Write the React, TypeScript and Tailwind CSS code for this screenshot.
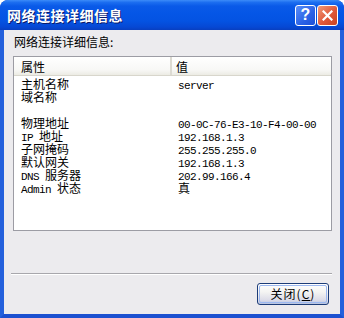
import React from "react";

const cjk = '"Noto Sans CJK SC", "Noto Sans", sans-serif';

function Mixed({ text }: { text: string }) {
  const parts = text.split(/([\x20-\x7E]+)/).filter((p) => p.length > 0);
  return (
    <>
      {parts.map((p, i) =>
        /^[\x20-\x7E]+$/.test(p) ? (
          <span
            key={i}
            className="text-[11px] tracking-[-0.6px] whitespace-pre"
            style={{ fontFamily: '"Liberation Mono", monospace' }}
          >
            {p}
          </span>
        ) : (
          <span key={i}>{p}</span>
        )
      )}
    </>
  );
}

const rows: [string, string][] = [
  ["主机名称", "server"],
  ["域名称", ""],
  ["", ""],
  ["物理地址", "00-0C-76-E3-10-F4-00-00"],
  ["IP 地址", "192.168.1.3"],
  ["子网掩码", "255.255.255.0"],
  ["默认网关", "192.168.1.3"],
  ["DNS 服务器", "202.99.166.4"],
  ["Admin 状态", "真"],
];

export default function App() {
  return (
    <div
      className="w-[344px] h-[318px] flex flex-col bg-[#0a3fc8] rounded-t-[8px] overflow-hidden"
      style={{ fontFamily: cjk }}
    >
      {/* Title bar */}
      <div className="h-[30px] flex items-center pl-[7px] pr-[6px] bg-[linear-gradient(to_bottom,#3c8cf8_0%,#1c6ef0_8%,#0a5ae8_20%,#0556e6_45%,#0453e2_70%,#0648d4_90%,#083fc0_100%)]">
        <div className="flex-1 text-white text-[14px] font-bold leading-[14px] [text-shadow:1px_1px_0_#0a1a6a] tracking-[0.5px]">
          网络连接详细信息
        </div>
        <div className="flex gap-[1px]">
          <div className="w-[21px] h-[21px] rounded-[3px] border border-white flex items-center justify-center bg-[linear-gradient(135deg,#5a8ef8,#2a62e6_60%,#1c50d8)]">
            <span className="text-white font-bold text-[16px] leading-[16px]" style={{ fontFamily: '"Liberation Sans", sans-serif' }}>?</span>
          </div>
          <div className="w-[21px] h-[21px] rounded-[3px] border border-white flex items-center justify-center bg-[linear-gradient(135deg,#f09a78,#e0583a_55%,#c84220)]">
            <svg width="11" height="11" viewBox="0 0 11 11">
              <path d="M1.5 1.5 L9.5 9.5 M9.5 1.5 L1.5 9.5" stroke="white" strokeWidth="2.2" strokeLinecap="square" />
            </svg>
          </div>
        </div>
      </div>

      {/* Body */}
      <div className="flex-1 flex flex-col border-l-[4px] border-r-[4px] border-b-[4px] border-l-[#2460dc] border-r-[#2460dc] border-b-[#1c50d0] bg-[#ecebee]">
        <div className="pl-[10px] pt-[5px] h-[26px] text-[12px] leading-[14px] text-black">
          网络连接详细信息:
        </div>
        <div className="ml-[9px] mr-[8px] h-[175px] border border-[#9c9ca4] bg-white flex flex-col text-[12px] text-black">
          <div className="h-[19px] flex border-b border-[#d8d6cc] bg-[linear-gradient(to_bottom,#ffffff,#f8f8f6_70%,#ecebe4)]">
            <div className="w-[158px] pl-[7px] pt-[3px] leading-[13px] border-r-2 border-r-[#dcdad2]">属性</div>
            <div className="flex-1 pl-[4px] pt-[3px] leading-[13px]">值</div>
          </div>
          <div className="flex flex-col pt-[1px]">
            {rows.map(([k, v], i) => (
              <div key={i} className="h-[13px] flex leading-[13px]">
                <div className="w-[158px] pl-[7px] whitespace-pre">
                  <Mixed text={k} />
                </div>
                <div className="flex-1 pl-[6px] whitespace-pre">
                  <Mixed text={v} />
                </div>
              </div>
            ))}
          </div>
        </div>
        <div className="mt-[42px] ml-[7px] mr-[8px] h-[2px] border-t border-t-[#a8a7ac] border-b border-b-white" />
        <div className="flex justify-end mr-[11px] mt-[8px]">
          <div className="w-[72px] h-[22px] rounded-[3px] border border-[#1c3c78] p-[1px] bg-[linear-gradient(to_bottom,#ffffff,#f4f4f2_40%,#dcdce8_80%,#b8c4e0)] flex items-center justify-center text-[12px] leading-[14px] text-black">
            <div className="w-full h-full rounded-[2px] border border-[#9cb8f0] flex items-center justify-center tracking-[1px]">
              关闭(<span className="underline">C</span>)
            </div>
          </div>
        </div>
      </div>
    </div>
  );
}
